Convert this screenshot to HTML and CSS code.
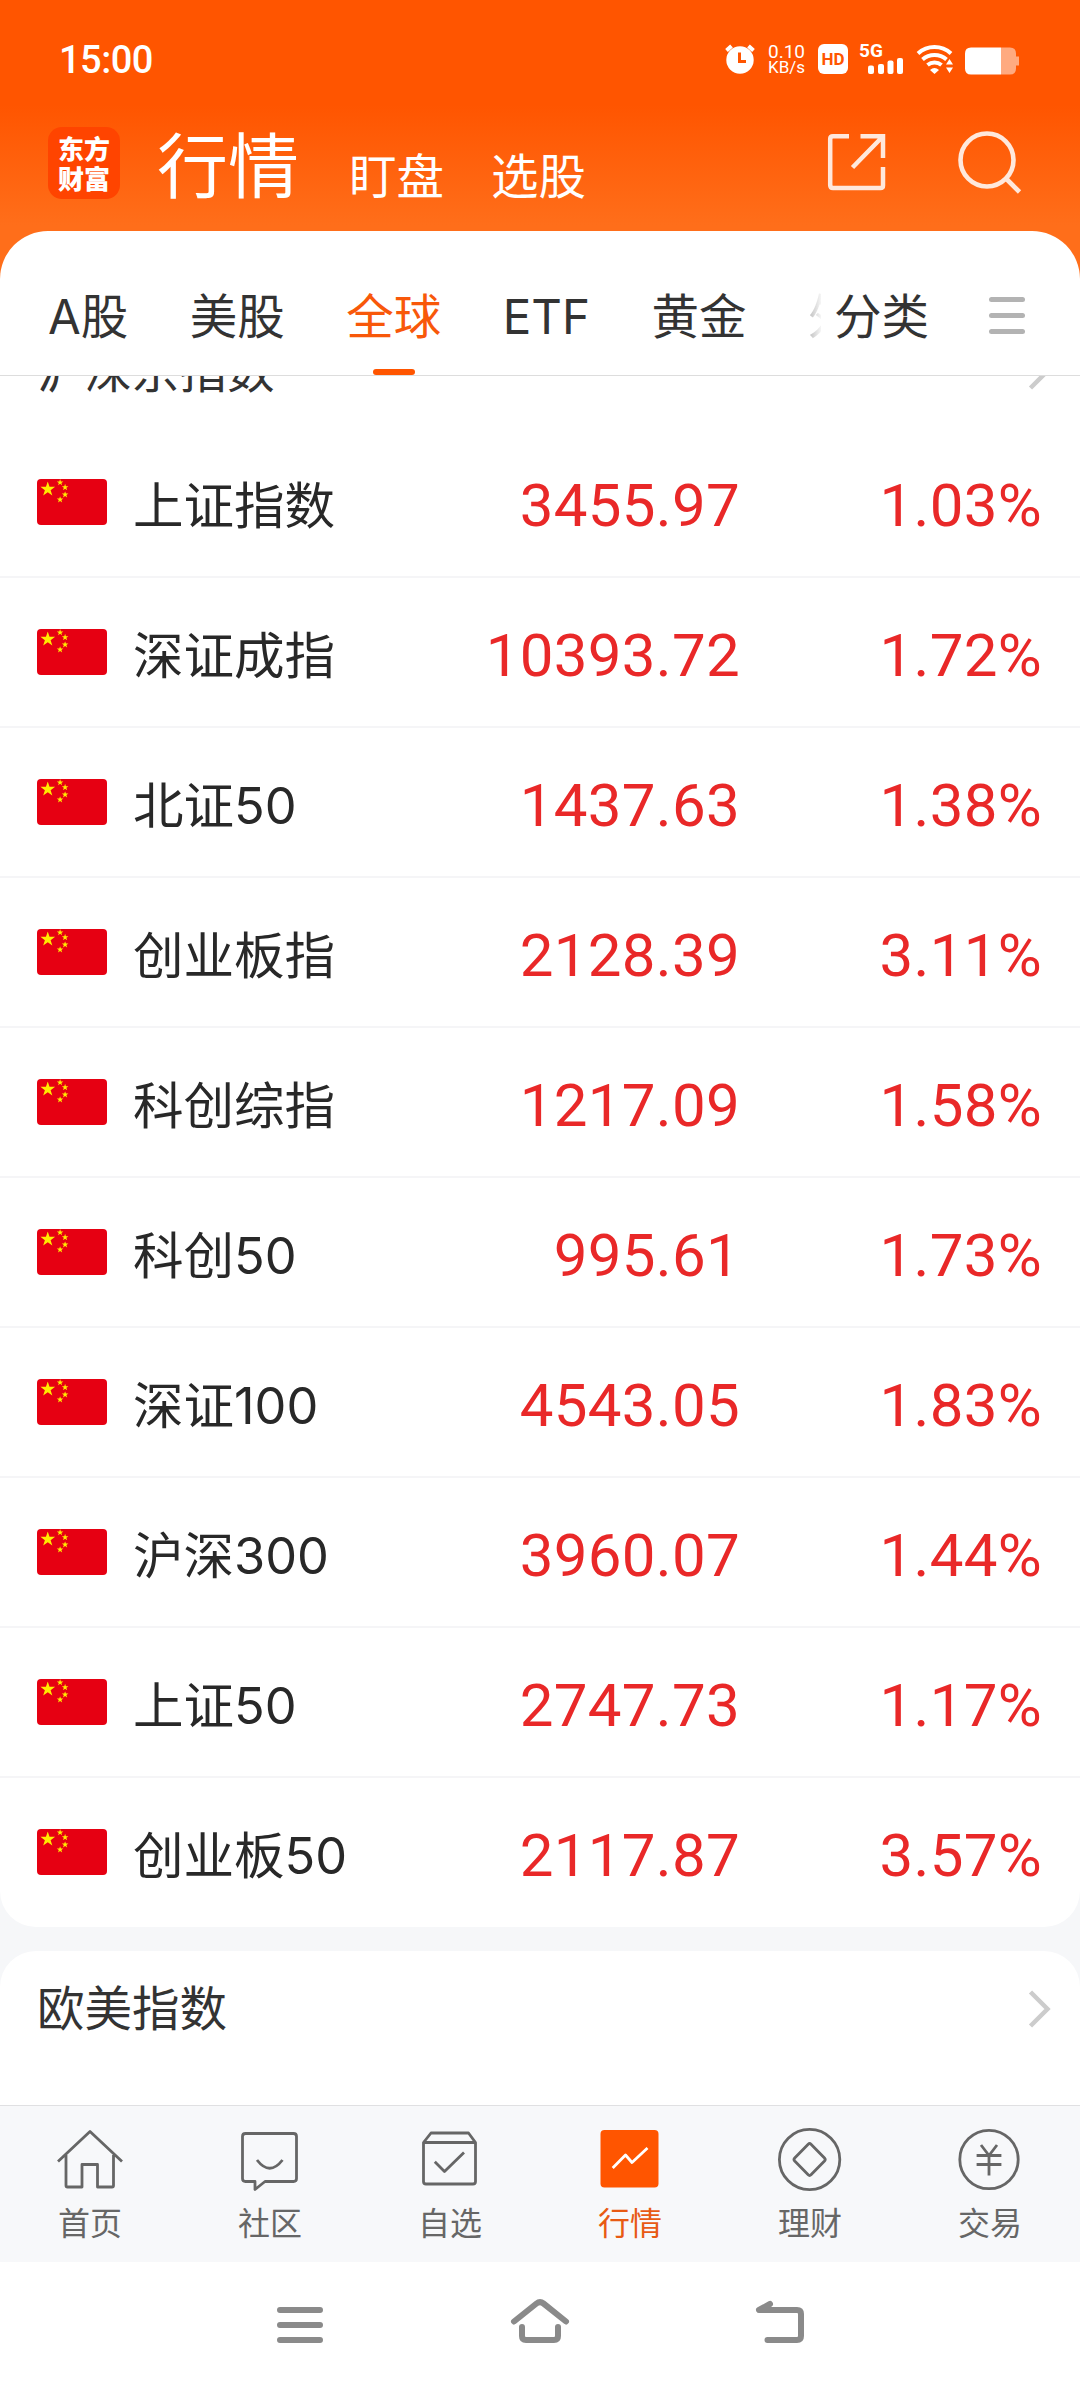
FILE: index.html
```html
<!DOCTYPE html>
<html lang="zh-CN">
<head>
  <meta charset="UTF-8" />
  <meta name="viewport" content="width=device-width, initial-scale=1.0" />
  <title>行情</title>
  <link rel="stylesheet" href="styles.css">
</head>
<body>
  <svg width="0" height="0" class="defs">
    <symbol id="star" viewBox="-10 -10 20 20">
      <path d="M0-10 2.3-3.1H9.5L3.7 1.2 5.9 8.1 0 3.8-5.9 8.1-3.7 1.2-9.5-3.1H-2.3Z" />
    </symbol>
    <symbol id="flag" viewBox="0 0 70 46">
      <rect width="70" height="46" rx="4" fill="#e60012" />
      <g fill="#ffec00">
        <use href="#star" x="3" y="2.5" width="15.5" height="15.5" />
        <use href="#star" x="19.6" y="0" width="7" height="7" />
        <use href="#star" x="24.6" y="4.8" width="7" height="7" />
        <use href="#star" x="24.6" y="12.2" width="7" height="7" />
        <use href="#star" x="19.6" y="17.2" width="7" height="7" />
      </g>
    </symbol>
    <symbol id="chevron" viewBox="0 0 24 40">
      <path d="M2.5 3 19.5 20 2.5 37" fill="none" stroke="#ccc" stroke-width="4.5" />
    </symbol>
  </svg>

  <header class="top">
    <div class="status">
      <span class="time">15:00</span>
      <div class="status-icons">
        <svg class="alarm" width="30" height="30" viewBox="0 0 30 30">
          <circle cx="15" cy="16" r="13.7" fill="#fff" />
          <path d="M1.5 6.500 6.500 2M23.500 2l5 4.500" stroke="#fff" stroke-width="4" />
          <path d="M14.500 8.500v9h6.500" fill="none" stroke="#ff5500" stroke-width="3" />
        </svg>
        <div class="speed"><span>0.10</span><span class="unit">KB/s</span></div>
        <div class="hd">HD</div>
        <div class="signal">
          <span>5G</span>
          <svg width="36" height="16" viewBox="0 0 36 16" fill="#fff">
            <rect x="0" y="7.5" width="6" height="8.5" rx="2" />
            <rect x="10" y="6" width="6" height="10" rx="2" />
            <rect x="19.5" y="2.5" width="6" height="13.5" rx="2" />
            <rect x="29" y="0" width="6" height="16" rx="2" />
          </svg>
        </div>
        <svg class="wifi" width="38" height="30" viewBox="0 0 38 30">
          <g fill="none" stroke="#fff" stroke-width="4">
            <path d="M2 9.5a24.5 24.5 0 0 1 33 0" />
            <path d="M6.5 15.5a18 18 0 0 1 24 0" />
            <path d="M11.5 21a11 11 0 0 1 14 0" />
          </g>
          <path d="M14 26q4.5-4 9 0l-4.5 4z" fill="#fff" />
          <path d="M30 20.5l3.5-5.5 3.5 5.5zM30 23.5h7L33.500 29z" fill="#fff" />
        </svg>
        <svg class="battery" width="54" height="28" viewBox="0 0 54 28">
          <path d="M36 .5h9q6 0 6 6v3h3v9h-3v3q0 6-6 6h-9z" fill="#ffaa80" />
          <path d="M36 .5H6Q0 .5 0 6.500v15q0 6 6 6h30z" fill="#fff" />
        </svg>
      </div>
    </div>
    <div class="titlebar">
      <div class="logo"><span>东方</span><span>财富</span></div>
      <h1>行情</h1>
      <a class="sub">盯盘</a>
      <a class="sub">选股</a>
      <div class="tools">
        <svg width="60" height="60" viewBox="0 0 60 60" fill="none" stroke="#ffe8dc" stroke-width="4.5">
          <path d="M22 4.2H6Q3.2 4.2 3.2 7v46Q3.2 56 6 56h47.500Q56 56 56 53.500V35" />
          <path d="M33.500 4.200H56V26M56 4.200 25.500 35.500" />
        </svg>
        <svg width="66" height="66" viewBox="0 0 66 66" fill="none" stroke="#ffe8dc" stroke-width="4.6">
          <circle cx="30" cy="31" r="26.5" />
          <path d="M49 49.5 62.500 63" />
        </svg>
      </div>
    </div>
  </header>

  <nav class="tabs">
    <div class="tab-list">
      <a>A股</a>
      <a>美股</a>
      <a class="active">全球</a>
      <a>ETF</a>
      <a>黄金</a>
      <a class="fade">外汇</a>
    </div>
    <a class="category">分类</a>
    <div class="burger"><i></i><i></i><i></i></div>
  </nav>

  <main class="content">
    <section class="card first">
      <div class="card-head"><h2>沪深京指数</h2><svg width="24" height="40"><use href="#chevron" /></svg></div>
      <ul class="list">
        <li><svg class="flag"><use href="#flag" /></svg><span class="name">上证指数</span><span class="price">3455.97</span><span class="pct">1.03%</span></li>
        <li><svg class="flag"><use href="#flag" /></svg><span class="name">深证成指</span><span class="price">10393.72</span><span class="pct">1.72%</span></li>
        <li><svg class="flag"><use href="#flag" /></svg><span class="name">北证50</span><span class="price">1437.63</span><span class="pct">1.38%</span></li>
        <li><svg class="flag"><use href="#flag" /></svg><span class="name">创业板指</span><span class="price">2128.39</span><span class="pct">3.11%</span></li>
        <li><svg class="flag"><use href="#flag" /></svg><span class="name">科创综指</span><span class="price">1217.09</span><span class="pct">1.58%</span></li>
        <li><svg class="flag"><use href="#flag" /></svg><span class="name">科创50</span><span class="price">995.61</span><span class="pct">1.73%</span></li>
        <li><svg class="flag"><use href="#flag" /></svg><span class="name">深证100</span><span class="price">4543.05</span><span class="pct">1.83%</span></li>
        <li><svg class="flag"><use href="#flag" /></svg><span class="name">沪深300</span><span class="price">3960.07</span><span class="pct">1.44%</span></li>
        <li><svg class="flag"><use href="#flag" /></svg><span class="name">上证50</span><span class="price">2747.73</span><span class="pct">1.17%</span></li>
        <li><svg class="flag"><use href="#flag" /></svg><span class="name">创业板50</span><span class="price">2117.87</span><span class="pct">3.57%</span></li>
      </ul>
    </section>
    <section class="card second">
      <div class="card-head"><h2>欧美指数</h2><svg width="24" height="40"><use href="#chevron" /></svg></div>
    </section>
  </main>

  <nav class="tabbar">
    <a>
      <svg viewBox="0 0 80 70"><path d="M8 36.5 40 6.5 72 36.5M16 30v30.500q0 1.500 1.500 1.500H32V39.500h15.500V62H62q1.500 0 1.500-1.500V30" /></svg>
      <span>首页</span>
    </a>
    <a>
      <svg viewBox="0 0 80 70"><path d="M15.500 8.500h48q3 0 3 3v42q0 3-3 3H35L25 64.500V56.500H15.500q-3 0-3-3v-42q0-3 3-3zM27 35q12.700 16.500 25.500 0" /></svg>
      <span>社区</span>
    </a>
    <a>
      <svg viewBox="0 0 80 70"><path d="M13.500 17.500 21 8H58.500L65.500 17.500V56.500q0 2.500-2.500 2.500H16q-2.500 0-2.500-2.500zH65.500M24.800 36.800 34.500 46.500 54 27.500" /></svg>
      <span>自选</span>
    </a>
    <a class="active">
      <svg viewBox="0 0 80 70"><rect x="10.5" y="5" width="58" height="57.5" rx="4" fill="#ff5500" stroke="none" /><path d="M22.700 43 35.500 30 42 37.500 57.500 23" stroke="#fff" /></svg>
      <span>行情</span>
    </a>
    <a>
      <svg viewBox="0 0 80 70"><circle cx="39.6" cy="34.5" r="30.2" /><path d="M38.200 19.200q1.400-1.400 2.800 0L54.500 33q1.400 1.500 0 3L41 49.800q-1.400 1.400-2.800 0L24.700 36q-1.400-1.500 0-3z" /></svg>
      <span>理财</span>
    </a>
    <a>
      <svg viewBox="0 0 80 70"><circle cx="39" cy="34.5" r="29.2" /><path d="M31 20l8 10.500L47 20M39 30v20.500M26.600 30.500h24.800M26.600 39.500h24.800" /></svg>
      <span>交易</span>
    </a>
  </nav>

  <footer class="sysnav">
    <svg viewBox="0 0 60 50"><path d="M10 11h40M10 26h40M10 41h40" /></svg>
    <svg viewBox="0 0 60 50"><path d="M4 22.5 26.500 4.500Q30 1.800 33.500 4.500L56 22.500M12 28v9q0 4 4 4h28q4 0 4-4v-9" /></svg>
    <svg viewBox="0 0 60 50"><path d="M20 5 9 11H47q4 0 4 4V37q0 4-4 4H17.500" /></svg>
  </footer>
</body>
</html>
```
FILE: styles.css
```css
* {
  box-sizing: border-box;
  margin: 0;
  padding: 0;
}
body {
  width: 1080px;
  height: 2388px;
  overflow: hidden;
  display: flex;
  flex-direction: column;
  font-family: Inter, "Noto Sans CJK SC", sans-serif;
  background: linear-gradient(#ff5500 0, #ff5500 105px, #ff6e1a 225px);
  color: #333;
}
.defs {
  position: absolute;
}
h1, h2 {
  font-weight: normal;
}

/* header */
.top {
  height: 231px;
  flex: none;
  color: #fff;
}
.status {
  height: 120px;
  padding: 0 61px 0 59px;
  display: flex;
  justify-content: space-between;
}
.time {
  font-family: Roboto, sans-serif;
  font-size: 38px;
  font-weight: 500;
  letter-spacing: -0.5px;
  line-height: 120px;
}
.status-icons {
  display: flex;
  align-items: flex-start;
  padding-top: 44px;
}
.speed {
  width: 38px;
  margin-left: 13px;
  font-size: 19px;
  line-height: 15px;
  display: flex;
  flex-direction: column;
  font-family: Roboto, sans-serif;
}
.speed .unit {
  font-size: 17px;
  line-height: 17px;
}
.hd {
  width: 30px;
  height: 30px;
  margin-left: 12px;
  border-radius: 6px;
  background: #fff;
  color: #ff5500;
  font: bold 17px/31px Roboto, sans-serif;
  text-align: center;
}
.signal {
  width: 45px;
  height: 30px;
  margin-left: 11px;
  display: flex;
  flex-direction: column;
  align-items: flex-end;
}
.signal span {
  width: 100%;
  font: bold 19px/14px Roboto, sans-serif;
}
.wifi {
  margin-left: 12px;
}
.battery {
  margin: 3px 0 0 11px;
}
.titlebar {
  height: 111px;
  padding: 0 57px 0 48px;
  display: flex;
  align-items: flex-start;
}
.logo {
  width: 72px;
  height: 72px;
  margin-top: 7px;
  padding-top: 6px;
  border-radius: 14px;
  background: #ff4400;
  font: 900 26px/30px "Noto Sans CJK SC", sans-serif;
  text-align: center;
}
.logo span {
  display: block;
}
.titlebar h1 {
  margin-left: 37px;
  font-size: 71px;
  line-height: 92px;
}
.sub {
  margin-left: 50px;
  font-size: 47.5px;
  line-height: 113px;
}
.sub + .sub {
  margin-left: 47px;
}
.tools {
  margin-left: auto;
  display: flex;
  gap: 70px;
  padding-top: 9px;
}
.tools svg:first-child {
  margin-top: 3px;
}

/* market tabs */
.tabs {
  height: 145px;
  flex: none;
  display: flex;
  align-items: flex-start;
  background: #fff;
  border-radius: 48px 48px 0 0;
  border-bottom: 1px solid #ddd;
  font-size: 47.5px;
  line-height: 172px;
}
.tab-list {
  width: 821px;
  height: 144px;
  padding-left: 48px;
  display: flex;
  gap: 61.5px;
  overflow: hidden;
  white-space: nowrap;
}
.tab-list .active {
  color: #f8580a;
  height: 144px;
  display: flex;
  flex-direction: column;
  align-items: center;
}
.tab-list .active::after {
  content: "";
  width: 42px;
  height: 6px;
  margin-top: -34px;
  border-radius: 3px;
  background: #ff5500;
}
.tab-list .fade {
  background: linear-gradient(90deg, #bbb 0, #fff 15px);
  background-clip: text;
  color: transparent;
}
.category {
  margin-left: 13px;
}
.burger {
  width: 36px;
  margin: 66px 0 0 60px;
  display: flex;
  flex-direction: column;
  gap: 11.5px;
}
.burger i {
  height: 4.5px;
  border-radius: 3px;
  background: #b3b3b3;
}

/* index lists */
.content {
  height: 1729px;
  flex: none;
  overflow: hidden;
  background: #f6f7f9;
}
.card {
  background: #fff;
  display: flex;
  flex-direction: column;
}
.card.first {
  height: 1551px;
  border-radius: 0 0 36px 36px;
}
.card.second {
  height: 154px;
  margin-top: 24px;
  padding-top: 13px;
  border-radius: 36px 36px 0 0;
}
.card-head {
  height: 90px;
  flex: none;
  padding: 0 28px 0 37px;
  display: flex;
  align-items: center;
  justify-content: space-between;
}
.card.first .card-head {
  margin-top: -50px;
}
.card-head h2 {
  font-size: 47.5px;
  line-height: 90px;
}
.first .list {
  padding-top: 12px;
}
.list li {
  height: 150px;
  padding: 0 38px 0 37px;
  display: flex;
  align-items: center;
  border-bottom: 2px solid #f5f5f7;
}
.list li:last-child {
  border-bottom-color: transparent;
}
.flag {
  width: 70px;
  height: 46px;
}
.name {
  margin-left: 26px;
  font-size: 50.5px;
  color: #282828;
}
.price, .pct {
  padding-top: 6px;
  font-family: Roboto, sans-serif;
  font-size: 60px;
  letter-spacing: 0.3px;
  color: #e92828;
  text-align: right;
}
.price {
  margin-left: auto;
}
.pct {
  width: 302px;
}

/* bottom bars */
.tabbar {
  height: 157px;
  flex: none;
  display: flex;
  background: #f7f8fa;
  border-top: 1px solid #e0e0e2;
}
.tabbar a {
  width: 180px;
  padding-top: 19px;
  display: flex;
  flex-direction: column;
  align-items: center;
  font-size: 32px;
  line-height: 57px;
  color: #666;
}
.tabbar a.active {
  color: #e85a14;
}
.tabbar svg {
  width: 80px;
  height: 70px;
  fill: none;
  stroke: #666;
  stroke-width: 2.8;
  stroke-linejoin: round;
}
.sysnav {
  height: 126px;
  flex: none;
  display: flex;
  justify-content: center;
  gap: 180px;
  padding-top: 37px;
  background: #fff;
}
.sysnav svg {
  width: 60px;
  height: 50px;
  fill: none;
  stroke: #8a8a8a;
  stroke-width: 6;
  stroke-linecap: round;
  stroke-linejoin: round;
}
```
